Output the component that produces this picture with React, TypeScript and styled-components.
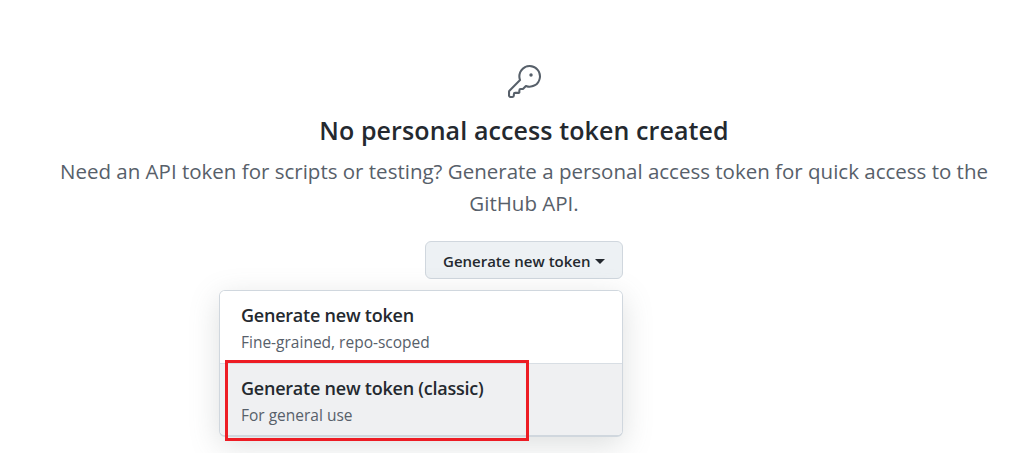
import React from "react";
import styled, { createGlobalStyle } from "styled-components";

const GlobalStyle = createGlobalStyle`
  body {
    margin: 0;
    background: #fff;
    overflow: hidden;
    font-family: "Segoe UI", "Open Sans", "Noto Sans", sans-serif;
  }
  * { box-sizing: border-box; }
`;

const Blankslate = styled.main`
  width: 1024px;
  height: 453px;
  padding: 65px 0 0 24px;
  display: flex;
  flex-direction: column;
  align-items: center;
  overflow: hidden;
`;

const KeyIcon = styled.svg`
  width: 33px;
  height: 33px;
  margin-left: 1px;
  fill: #57606a;
  flex: none;
`;

const Heading = styled.h2`
  margin: 12px 0 0;
  font-size: 25px;
  line-height: 40px;
  font-weight: 600;
  letter-spacing: 0.1px;
  color: #24292f;
  white-space: nowrap;
`;

const Description = styled.p`
  margin: 5px 0 0;
  font-size: 20.5px;
  line-height: 32px;
  color: #57606a;
  text-align: center;
  white-space: nowrap;
`;

const MenuAnchor = styled.div`
  position: relative;
  margin-top: 22px;
`;

const MenuButton = styled.button`
  width: 198px;
  height: 38px;
  padding: 1px 17px 0;
  display: flex;
  align-items: center;
  justify-content: space-between;
  border: 1px solid #d0d7de;
  border-radius: 6px;
  background: #edf1f4;
  color: #24292f;
  font: inherit;
  font-size: 15px;
  font-weight: 600;
  white-space: nowrap;
`;

const Caret = styled.span`
  margin-top: 2px;
  border: 5px solid transparent;
  border-top-color: #24292f;
  border-bottom: 0;
`;

const Menu = styled.div`
  position: absolute;
  top: 49px;
  right: 0;
  width: 404px;
  height: 147px;
  border: 1px solid #d0d7de;
  border-bottom-width: 2px;
  border-radius: 6px;
  background: #fff;
  box-shadow: 0 8px 30px rgba(100, 108, 108, 0.22);
  overflow: hidden;
`;

const MenuItem = styled.div<{ $active?: boolean }>`
  height: ${(p) => (p.$active ? 73 : 72)}px;
  padding: 10px 21px 0;
  background: ${(p) => (p.$active ? "#eff0f2" : "#fff")};
  border-top: ${(p) => (p.$active ? "1px solid #d8dee4" : "0")};
`;

const ItemTitle = styled.div`
  font-size: 18px;
  line-height: 28px;
  font-weight: 600;
  letter-spacing: -0.23px;
  color: #24292f;
  white-space: nowrap;
`;

const ItemNote = styled.div`
  margin-top: 1px;
  font-size: 15.5px;
  line-height: 24px;
  color: #57606a;
  white-space: nowrap;
`;

const Highlight = styled.div`
  position: absolute;
  top: 119px;
  left: -200px;
  width: 304px;
  height: 81px;
  border: 3px solid #ed1c24;
`;

export default function App() {
  return (
    <>
      <GlobalStyle />
      <Blankslate>
        <KeyIcon viewBox="0 0 24 24" aria-hidden="true">
          <path d="M16.75 8.5a1.25 1.25 0 1 0 0-2.5 1.25 1.25 0 0 0 0 2.5Z" />
          <path d="M15.75 0a8.25 8.25 0 0 0-7.851 10.79L.513 18.178A1.75 1.75 0 0 0 0 19.414v2.836C0 23.217.784 24 1.75 24h1.5A1.75 1.75 0 0 0 5 22.25v-1a.25.25 0 0 1 .25-.25h2.735a.75.75 0 0 0 .545-.22l.214-.213A.875.875 0 0 0 9 19.948V18.5a.25.25 0 0 1 .25-.25h1.086c.464 0 .91-.184 1.237-.513l1.636-1.636A8.25 8.25 0 1 0 15.75 0ZM9 8.25a6.75 6.75 0 1 1 4.288 6.287.75.75 0 0 0-.804.168l-1.971 1.972a.25.25 0 0 1-.177.073H9.25A1.75 1.75 0 0 0 7.5 18.5v1H5.25a1.75 1.75 0 0 0-1.75 1.75v1a.25.25 0 0 1-.25.25h-1.5a.25.25 0 0 1-.25-.25v-2.836a.25.25 0 0 1 .073-.177l7.722-7.721a.75.75 0 0 0 .168-.804A6.73 6.73 0 0 1 9 8.25Z" />
        </KeyIcon>
        <Heading>No personal access token created</Heading>
        <Description>
          Need an API token for scripts or testing? Generate a personal access token for quick access to the
          <br />
          GitHub API.
        </Description>
        <MenuAnchor>
          <MenuButton type="button">
            Generate new token
            <Caret />
          </MenuButton>
          <Menu>
            <MenuItem>
              <ItemTitle>Generate new token</ItemTitle>
              <ItemNote>Fine-grained, repo-scoped</ItemNote>
            </MenuItem>
            <MenuItem $active>
              <ItemTitle>Generate new token (classic)</ItemTitle>
              <ItemNote>For general use</ItemNote>
            </MenuItem>
          </Menu>
          <Highlight />
        </MenuAnchor>
      </Blankslate>
    </>
  );
}
